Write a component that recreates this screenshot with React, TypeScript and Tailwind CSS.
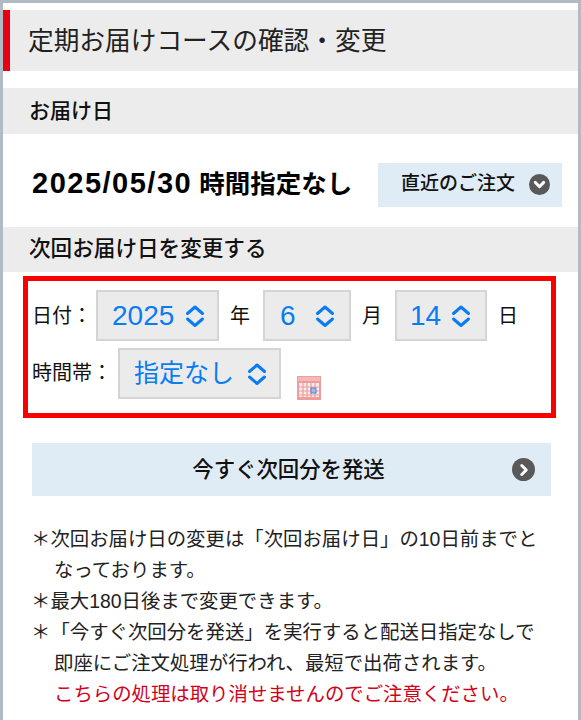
import { ChevronDown, ChevronRight } from 'lucide-react';

const jp = "font-['Liberation_Sans','Noto_Sans_CJK_JP',sans-serif]";

function Updown() {
  return (
    <svg width="20" height="24" viewBox="0 0 20 24" fill="none" stroke="#0a7cf2" strokeWidth="3" strokeLinecap="round" strokeLinejoin="round">
      <path d="M2.5 9.5 10 3l7.5 6.5" />
      <path d="M2.5 15 10 21.5 17.5 15" />
    </svg>
  );
}

function Picker({ value, width, pad, size }: { value: string; width: string; pad: string; size: string }) {
  return (
    <div className={`flex h-[51px] items-center justify-between border-2 border-[#d4d4d4] bg-[#ebebeb] text-[#0a7cf2] ${size} ${width} ${pad}`}>
      <span>{value}</span>
      <Updown />
    </div>
  );
}

function CalendarIcon() {
  return (
    <svg width="24" height="24" viewBox="0 0 24 24" className="block">
      <rect x="0" y="0" width="24" height="24" fill="#ee9c9c" />
      <rect x="1" y="1" width="22" height="4" fill="#f4b8b8" />
      <rect x="2" y="7" width="20" height="14" fill="#fdeaea" />
      <path d="M6 7v14M10 7v14M14 7v14M18 7v14M2 11h20M2 15h20M2 19h20" stroke="#ee9c9c" strokeWidth="1.2" />
      <rect x="14" y="12" width="5" height="5" fill="#9dbcec" stroke="#4f82d8" />
    </svg>
  );
}

export default function App() {
  return (
    <div className={`h-[720px] w-[581px] overflow-hidden border-x-[3px] border-t-[3px] border-x-[#b0bbc6] border-t-[#b0bbc6] bg-white text-[#111] ${jp}`}>
      <div className="pt-[7px]">
        <div className="flex h-[61px] items-center border-l-[7px] border-[#e60012] bg-[#ececec] pl-[18px] pt-[2px] text-[25.7px] text-[#222]">
          定期お届けコースの確認・変更
        </div>

        <div className="mt-[17px] flex h-[46px] items-center bg-[#ececec] pl-[26px] text-[21px] font-medium">
          お届け日
        </div>

        <div className="flex h-[93px] items-center justify-between pl-[29px] pr-[16px]">
          <span className="mt-[6px] text-[25.5px] font-bold text-black">
            <span className="text-[29px] tracking-[1.5px]">2025/05/30</span> 時間指定なし
          </span>
          <div className="mt-[8px] flex h-[44px] w-[184px] items-center justify-between bg-[#e0ecf5] pl-[23px] pr-[12px] text-[19px] font-medium">
            <span>直近のご注文</span>
            <span className="flex h-[21px] w-[21px] items-center justify-center rounded-full bg-[#595959]">
              <ChevronDown size={17} color="#fff" strokeWidth={4} />
            </span>
          </div>
        </div>

        <div className="flex h-[45px] items-center bg-[#ececec] pl-[26px] text-[21.6px] font-medium">
          次回お届け日を変更する
        </div>

        <div className="ml-[20px] mt-[4px] h-[142px] w-[533px] border-[5px] border-[#fa0000] pl-[4px] pt-[9px] text-[20px]">
          <div className="flex items-center">
            <span className="w-[64px]">日付：</span>
            <Picker value="2025" width="w-[123px]" pad="pl-[14px] pr-[12px]" size="text-[28px]" />
            <span className="ml-[11px] w-[33px]">年</span>
            <Picker value="6" width="w-[88px]" pad="pl-[15px] pr-[14px]" size="text-[28px]" />
            <span className="ml-[11px] w-[33px]">月</span>
            <Picker value="14" width="w-[92px]" pad="pl-[13px] pr-[14px]" size="text-[28px]" />
            <span className="ml-[11px]">日</span>
          </div>
          <div className="mt-[7px] flex items-end">
            <span className="mb-[11px] w-[86px] whitespace-nowrap">時間帯：</span>
            <Picker value="指定なし" width="w-[163px]" pad="pl-[14px] pr-[12px]" size="text-[25px]" />
            <span className="ml-[16px] mb-[-1px]"><CalendarIcon /></span>
          </div>
        </div>

        <div className="relative ml-[29px] mt-[25px] flex h-[53px] w-[519px] items-center justify-center bg-[#e0ecf5] pr-[6px] pt-[2px] text-[21.4px] font-medium">
          今すぐ次回分を発送
          <span className="absolute right-[16px] top-[15px] flex h-[23px] w-[23px] items-center justify-center rounded-full bg-[#595959]">
            <ChevronRight size={18} color="#fff" strokeWidth={4} />
          </span>
        </div>

        <div className="ml-[28px] mt-[28px] text-[19.4px] leading-[31px] text-[#222]">
          <p className="pl-[23px] -indent-[23px]">＊次回お届け日の変更は「次回お届け日」の10日前までと<br />なっております。</p>
          <p className="pl-[23px] -indent-[23px]">＊最大180日後まで変更できます。</p>
          <p className="pl-[23px] -indent-[23px]">＊「今すぐ次回分を発送」を実行すると配送日指定なしで<br />即座にご注文処理が行われ、最短で出荷されます。<br /><span className="text-[#d0021b]">こちらの処理は取り消せませんのでご注意ください。</span></p>
        </div>
      </div>
    </div>
  );
}
